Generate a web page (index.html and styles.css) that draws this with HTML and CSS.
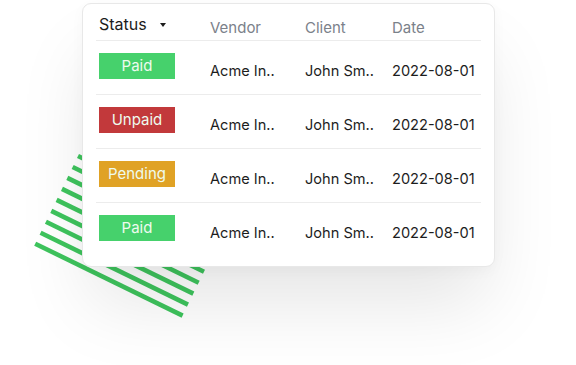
FILE: index.html
```html
<!DOCTYPE html>
<html>
<head>
<meta charset="utf-8">
<link rel="stylesheet" href="styles.css">
</head>
<body>
<div class="scene">
  <svg class="stripes" width="576" height="365" viewBox="0 0 576 365" aria-hidden="true">
    <g transform="translate(78,156) rotate(26)" stroke="#3ec45d" stroke-width="4.6">
      <line x1="0" y1="0" x2="164" y2="0"/>
      <line x1="0" y1="12.2" x2="164" y2="12.2"/>
      <line x1="0" y1="24.4" x2="164" y2="24.4"/>
      <line x1="0" y1="36.6" x2="164" y2="36.6"/>
      <line x1="0" y1="48.8" x2="164" y2="48.8"/>
      <line x1="0" y1="61" x2="164" y2="61"/>
      <line x1="0" y1="73.2" x2="164" y2="73.2"/>
      <line x1="0" y1="85.4" x2="164" y2="85.4"/>
      <line x1="0" y1="97.6" x2="164" y2="97.6"/>
    </g>
  </svg>
  <div class="card">
    <div class="row head">
      <div class="cell status-h">Status <span class="caret"></span></div>
      <div class="cell h">Vendor</div>
      <div class="cell h">Client</div>
      <div class="cell h">Date</div>
    </div>
    <div class="row">
      <div class="cell"><span class="badge paid">Paid</span></div>
      <div class="cell t">Acme In..</div>
      <div class="cell t">John Sm..</div>
      <div class="cell t">2022-08-01</div>
    </div>
    <div class="row">
      <div class="cell"><span class="badge unpaid">Unpaid</span></div>
      <div class="cell t">Acme In..</div>
      <div class="cell t">John Sm..</div>
      <div class="cell t">2022-08-01</div>
    </div>
    <div class="row">
      <div class="cell"><span class="badge pending">Pending</span></div>
      <div class="cell t">Acme In..</div>
      <div class="cell t">John Sm..</div>
      <div class="cell t">2022-08-01</div>
    </div>
    <div class="row last">
      <div class="cell"><span class="badge paid">Paid</span></div>
      <div class="cell t">Acme In..</div>
      <div class="cell t">John Sm..</div>
      <div class="cell t">2022-08-01</div>
    </div>
  </div>
</div>
</body>
</html>
```

FILE: styles.css
```css
html, body {
  margin: 0;
  padding: 0;
  background: #ffffff;
}
body {
  font-family: Inter, "Noto Sans", sans-serif;
  color: #1d1d1d;
}
.scene {
  position: relative;
  width: 576px;
  height: 365px;
  overflow: hidden;
  padding-top: 3px;
  box-sizing: border-box;
}
.stripes {
  position: absolute;
  left: 0;
  top: 0;
}
.card {
  position: relative;
  margin-left: 82px;
  width: 413px;
  height: 264px;
  box-sizing: border-box;
  background: #ffffff;
  border: 1px solid #e8e8e8;
  border-radius: 9px;
  padding: 0 13px 0 13px;
  box-shadow: 0 45px 75px -8px rgba(0, 0, 0, 0.10), 0 4px 14px rgba(0, 0, 0, 0.03);
}
.row {
  display: grid;
  grid-template-columns: 114px 95px 87px 1fr;
  height: 54px;
  box-sizing: border-box;
  border-bottom: 1px solid #ececec;
}
.row.head {
  height: 37px;
}
.row.last {
  border-bottom: none;
}
.cell {
  font-size: 14.6px;
  line-height: 18px;
  white-space: nowrap;
}
.status-h {
  padding: 4px 0 0 3px;
  font-size: 16px;
  line-height: 20px;
  color: #1c1c1c;
  display: flex;
  align-items: center;
}
.caret {
  display: inline-block;
  width: 0;
  height: 0;
  border-left: 3.5px solid transparent;
  border-right: 3.5px solid transparent;
  border-top: 4px solid #1c1c1c;
  margin-left: 13px;
  margin-top: 1px;
}
.h {
  padding-top: 15px;
  font-size: 15px;
  color: #7b818a;
}
.t {
  padding-top: 21px;
  color: #1d1d1d;
}
.badge {
  display: block;
  margin: 12px 0 0 3px;
  width: 76px;
  height: 26px;
  line-height: 26px;
  text-align: center;
  font-size: 15px;
  color: #eefbee;
}
.paid { background: #46d16c; }
.unpaid { background: #c2393b; }
.pending { background: #e0a225; }
```
